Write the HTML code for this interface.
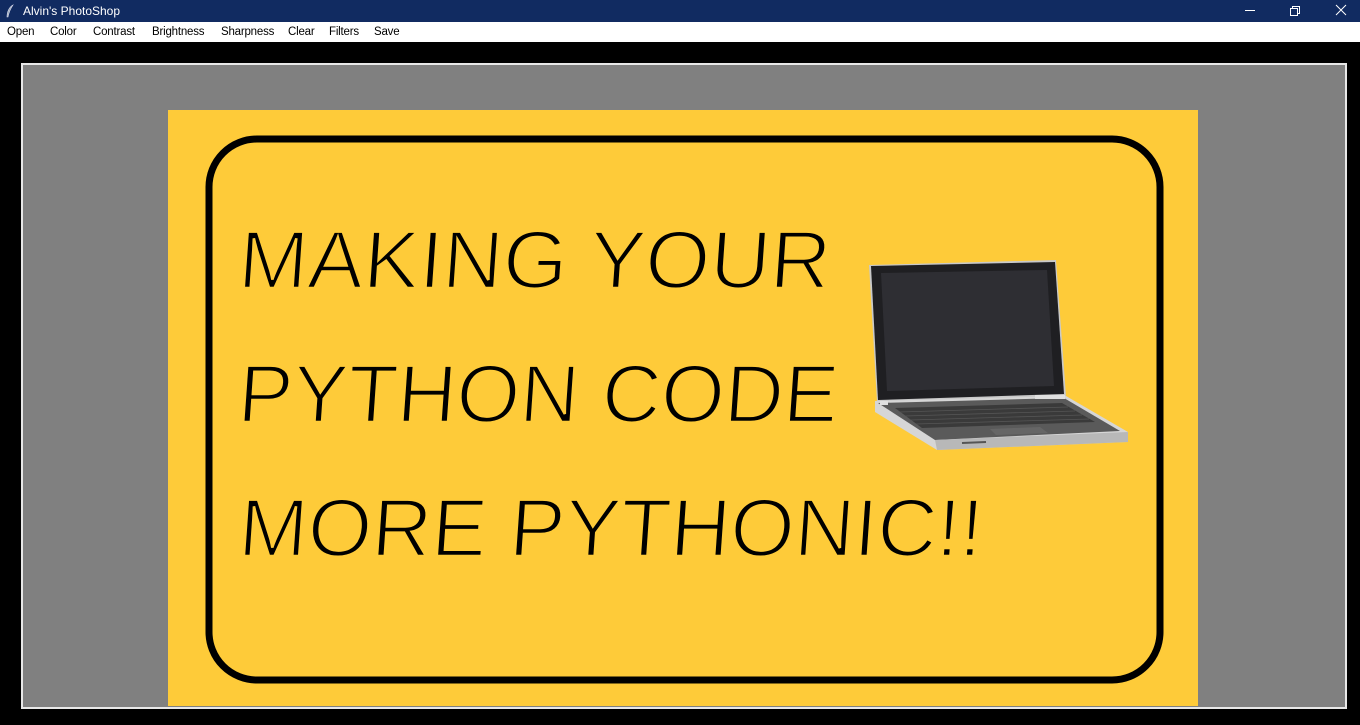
<!DOCTYPE html>
<html><head><meta charset="utf-8">
<style>
*{margin:0;padding:0;box-sizing:border-box}
html,body{width:1360px;height:725px;overflow:hidden;background:#000;font-family:"Liberation Sans",sans-serif}
#title{position:absolute;left:0;top:0;width:1360px;height:22px;background:#112b61;color:#fff;font-size:12px}
#title .t{position:absolute;left:23px;top:4px}
#menu{position:absolute;left:0;top:22px;width:1360px;height:20px;background:#fff;font-size:11.5px;color:#000;letter-spacing:-0.2px}
#menu span{position:absolute;top:4px}
#canvas{position:absolute;left:21px;top:63px;width:1326px;height:646px;background:#808080;border:2px solid #e8e8e8}
</style></head><body>
<div id="title">
<svg style="position:absolute;left:5px;top:4px" width="10" height="14"><path d="M8 1 C4 3 2 8 2 13 L3 13 C4 8 6 4 8 1Z" fill="#9ab" stroke="#dde" stroke-width="0.6"/></svg>
<span class="t">Alvin's PhotoShop</span>
<svg style="position:absolute;left:1240px;top:0" width="120" height="22" fill="none" stroke="#fff" stroke-width="1">
<path d="M5 10.5H15"/>
<rect x="50.5" y="8.5" width="7" height="7"/><path d="M52.5 8.5V6.5H59.5V13.5H57.5"/>
<path d="M96 5L106 15M106 5L96 15"/>
</svg>
</div>
<div id="menu">
<span style="left:7px">Open</span><span style="left:50px">Color</span><span style="left:93px">Contrast</span><span style="left:152px">Brightness</span><span style="left:221px">Sharpness</span><span style="left:288px">Clear</span><span style="left:329px">Filters</span><span style="left:374px">Save</span>
</div>
<div id="canvas"></div>
<svg style="position:absolute;left:0;top:0" width="1360" height="725">
<rect x="168" y="110" width="1030" height="596" fill="#fecb39"/>
<rect x="209" y="139" width="951" height="541" rx="48" fill="none" stroke="#000" stroke-width="7"/>
<g font-family="Liberation Sans" font-size="82" fill="#000" stroke="#fecb39" stroke-width="2.5" transform="skewX(-4)">
<text x="257" y="288" textLength="592" lengthAdjust="spacingAndGlyphs">MAKING YOUR</text>
<text x="266" y="422" textLength="600" lengthAdjust="spacingAndGlyphs">PYTHON CODE</text>
<text x="276" y="556" textLength="744" lengthAdjust="spacingAndGlyphs">MORE PYTHONIC!!</text>
</g>
<polygon points="869,265 1056,260 1066,396 877,402" fill="#c9c9c9"/>
<polygon points="871,266 1055,262 1064,394 878,400" fill="#1f1f22"/>
<polygon points="881,273 1047,270 1054,386 887,391" fill="#2e2e33"/>
<polygon points="875,401 1066,396 1128,432 1128,442 937,450 875,412" fill="#d6d6d6"/>
<polygon points="878,403 1064,398 1120,431 935,440" fill="#5a5a5a"/>
<polygon points="895,408 1062,403 1095,422 922,428" fill="#3a3a3a"/>
<g stroke="#555" stroke-width="0.8">
<line x1="900" y1="412" x2="1068" y2="407"/>
<line x1="905" y1="416" x2="1075" y2="411"/>
<line x1="911" y1="420" x2="1082" y2="415"/>
<line x1="916" y1="424" x2="1089" y2="419"/>
</g>
<polygon points="990,429 1040,427 1048,433 996,435" fill="#666"/>
<polygon points="935,440 1128,432 1128,442 937,450" fill="#b8b8b8"/>
<line x1="962" y1="443" x2="986" y2="442" stroke="#555" stroke-width="2"/>
<rect x="880" y="401" width="8" height="4" fill="#e0e0e0"/>
<rect x="1035" y="395" width="30" height="4" fill="#e0e0e0"/>
</svg>
</body></html>
